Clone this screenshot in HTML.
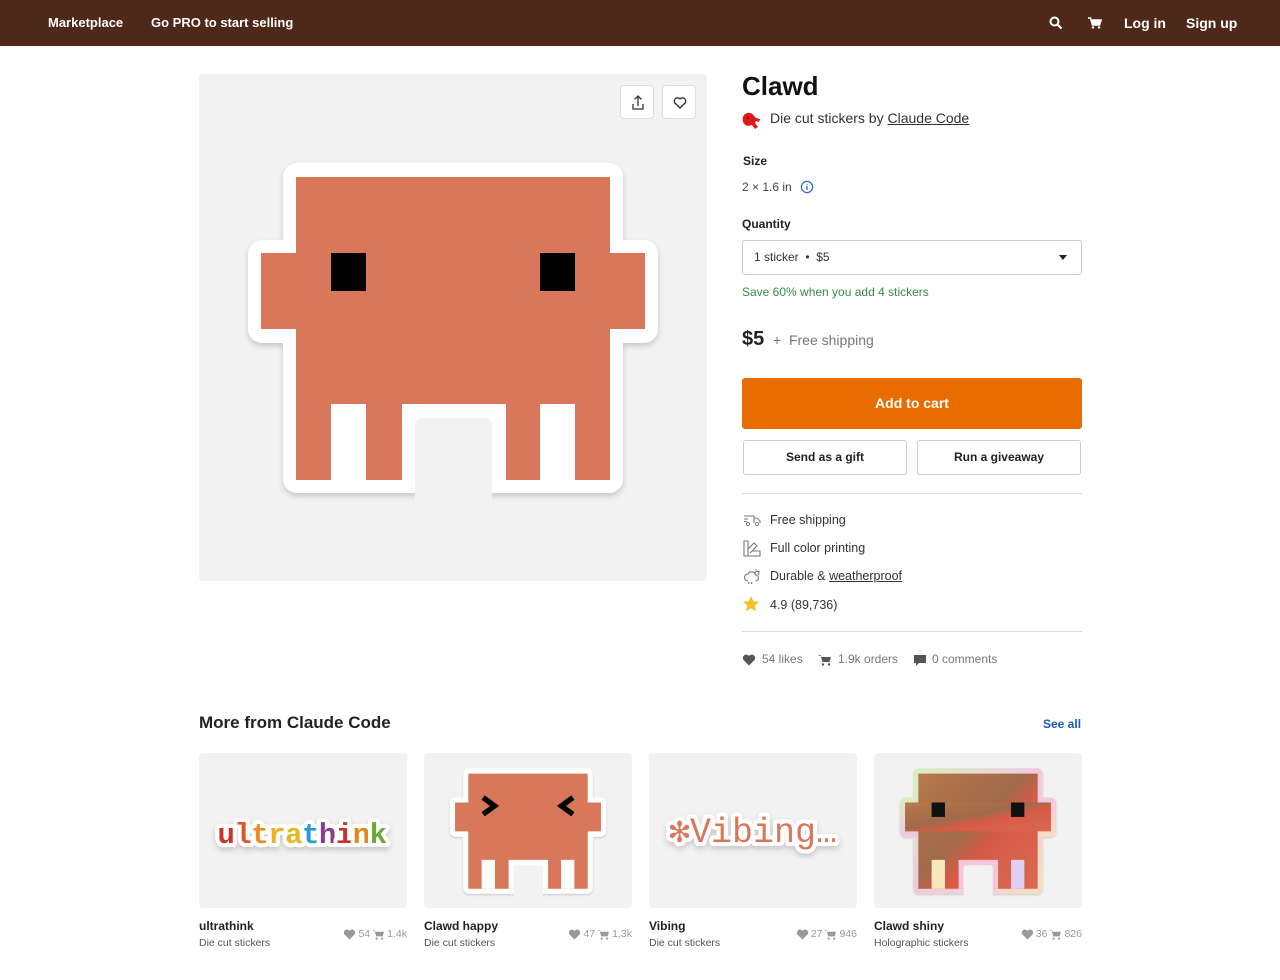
<!DOCTYPE html>
<html><head><meta charset="utf-8"><style>
*{margin:0;padding:0;box-sizing:border-box}
body{width:1280px;height:980px;background:#fff;font-family:"Liberation Sans",Arial,sans-serif;color:#222;position:relative;overflow:hidden}
.a{position:absolute;white-space:nowrap}
.hdr{position:absolute;left:0;top:0;width:1280px;height:46px;background:#4e2818}
.hdr .a{color:#fff;font-weight:bold;font-size:13px;top:15px}
.box{position:absolute;background:#f2f2f2;border-radius:4px}
.ib{position:absolute;width:34px;height:34px;background:#fff;border:1px solid #ddd;border-radius:4px;top:85px}
.btn{position:absolute;border:1px solid #ccc;border-radius:3px;background:#fff;font-weight:bold;font-size:12px;text-align:center;line-height:33px;top:440px;height:35px;width:164px}
.f{font-size:12.5px;color:#333}
.ct{font-size:12px;font-weight:bold;color:#222}
.cs{font-size:10.5px;color:#555}
.cm{font-size:10.5px;color:#999;display:flex;align-items:center;gap:2px}
</style></head><body>
<div class="hdr">
 <div class="a" style="left:48px">Marketplace</div>
 <div class="a" style="left:151px">Go PRO to start selling</div>
 <svg class="a" style="left:1049px;top:16px" width="14" height="14" viewBox="0 0 14 14"><circle cx="5.5" cy="5.5" r="4" fill="none" stroke="#fff" stroke-width="2"/><path d="M8.5 8.5L12.5 12.5" stroke="#fff" stroke-width="2.2"/></svg>
 <svg class="a" style="left:1088px;top:17px" width="14" height="12" viewBox="0 0 14 12"><path d="M0 1h2.5l2 7h7l1.5-5H4" fill="none" stroke="#fff" stroke-width="1.6"/><path d="M4 3h9l-1.5 5h-7z" fill="#fff"/><circle cx="5" cy="10.5" r="1.2" fill="#fff"/><circle cx="11" cy="10.5" r="1.2" fill="#fff"/></svg>
 <div class="a" style="left:1124px;font-size:14px;top:15px">Log in</div>
 <div class="a" style="left:1186px;font-size:14px;top:15px">Sign up</div>
</div>

<div class="box" style="left:199px;top:74px;width:508px;height:507px"></div>
<div class="ib" style="left:620px"><svg width="34" height="34" viewBox="0 0 34 34"><path d="M17 10v10M13.5 13.5L17 10l3.5 3.5M12 18v5h10v-5" fill="none" stroke="#333" stroke-width="1.3"/></svg></div>
<div class="ib" style="left:662px"><svg width="34" height="34" viewBox="0 0 34 34"><path d="M17 22l-5-5a3 3 0 0 1 5-4a3 3 0 0 1 5 4z" fill="none" stroke="#333" stroke-width="1.4"/></svg></div>

<div class="box" style="left:199px;top:753px;width:208px;height:155px"></div>
<div class="box" style="left:424px;top:753px;width:208px;height:155px"></div>
<div class="box" style="left:649px;top:753px;width:208px;height:155px"></div>
<div class="box" style="left:874px;top:753px;width:208px;height:155px"></div>

<svg class="a" style="left:0;top:0" width="1280" height="980">
<defs>
<filter id="sh" x="-10%" y="-10%" width="120%" height="125%"><feDropShadow dx="0" dy="3" stdDeviation="3" flood-color="#000" flood-opacity="0.18"/></filter>
<linearGradient id="holo" x1="0" y1="0" x2="1" y2="1"><stop offset="0" stop-color="#b8784a"/><stop offset="0.45" stop-color="#a06a4a"/><stop offset="0.6" stop-color="#d85a48"/><stop offset="1" stop-color="#d86a50"/></linearGradient>
<linearGradient id="holow" x1="0" y1="0" x2="1" y2="1"><stop offset="0" stop-color="#d8f0c0"/><stop offset="0.5" stop-color="#f0c8e0"/><stop offset="1" stop-color="#f8e0c0"/></linearGradient>
<g id="stk">
 <g filter="url(#sh)">
 <rect x="283" y="163" width="340" height="330" rx="14" fill="#fff"/>
 <rect x="248" y="240" width="410" height="103" rx="14" fill="#fff"/>
 </g>
 <rect x="415" y="418" width="77" height="90" rx="6" fill="#f2f2f2"/>
</g>
</defs>
<use href="#stk"/>
<rect x="296" y="177" width="314" height="303" fill="#d9775a"/>
<rect x="261" y="253" width="384" height="76" fill="#d9775a"/>
<rect x="331" y="253" width="35" height="38" fill="#000"/>
<rect x="540" y="253" width="35" height="38" fill="#000"/>
<rect x="331" y="404" width="35" height="76" fill="#fff"/>
<rect x="540" y="404" width="35" height="76" fill="#fff"/>
<rect x="402" y="404" width="104" height="76" fill="#fff"/>
<rect x="415" y="418" width="77" height="90" rx="6" fill="#f2f2f2"/>
<g transform="translate(528,831) scale(0.38) translate(-453,-328)">
<use href="#stk"/>
<rect x="296" y="177" width="314" height="303" fill="#d9775a"/>
<rect x="261" y="253" width="384" height="76" fill="#d9775a"/>
<path d="M335 240l30 22l-30 22" fill="none" stroke="#000" stroke-width="14"/>
<path d="M571 240l-30 22l30 22" fill="none" stroke="#000" stroke-width="14"/>
<rect x="331" y="404" width="35" height="76" fill="#fff"/>
<rect x="540" y="404" width="35" height="76" fill="#fff"/>
<rect x="402" y="404" width="104" height="76" fill="#fff"/>
<rect x="415" y="418" width="77" height="90" rx="6" fill="#f2f2f2"/>
</g>
<g transform="translate(978,831) scale(0.38) translate(-453,-328)">
<g filter="url(#sh)">
<rect x="283" y="163" width="340" height="330" rx="14" fill="url(#holow)"/>
<rect x="248" y="240" width="410" height="103" rx="14" fill="url(#holow)"/>
</g>
<rect x="296" y="177" width="314" height="303" fill="url(#holo)"/>
<rect x="261" y="253" width="384" height="76" fill="url(#holo)"/>
<rect x="331" y="253" width="35" height="38" fill="#111"/>
<rect x="540" y="253" width="35" height="38" fill="#111"/>
<rect x="331" y="404" width="35" height="76" fill="#f8e8c0"/>
<rect x="540" y="404" width="35" height="76" fill="#e0d0f0"/>
<rect x="402" y="404" width="104" height="76" fill="#f4c8d8"/>
<rect x="415" y="418" width="77" height="90" rx="6" fill="#f2f2f2"/>
</g>
<text x="302" y="843" text-anchor="middle" font-family="Liberation Mono,monospace" font-weight="bold" font-size="29" stroke="#fff" stroke-width="8" stroke-linejoin="round" paint-order="stroke" filter="url(#sh)" letter-spacing="-0.5"><tspan fill="#c8362c">u</tspan><tspan fill="#e0542a">l</tspan><tspan fill="#f08a20">t</tspan><tspan fill="#f0b020">r</tspan><tspan fill="#e0b820">a</tspan><tspan fill="#2a9ad0">t</tspan><tspan fill="#8a3a8a">h</tspan><tspan fill="#c8362c">i</tspan><tspan fill="#e08a20">n</tspan><tspan fill="#6aa83a">k</tspan></text>
<text x="753" y="842" text-anchor="middle" font-family="Liberation Mono,monospace" font-size="35" fill="#d9775a" stroke="#fff" stroke-width="8" stroke-linejoin="round" paint-order="stroke" filter="url(#sh)">✻Vibing…</text>
</svg>

<div class="a" style="left:742px;top:71px;font-size:26px;font-weight:bold;color:#111">Clawd</div>
<svg class="a" style="left:741px;top:111px" width="22" height="20" viewBox="0 0 22 20"><path d="M3 4c3-3 8-3 10 1l2 2 4 1-1 3-3-1-1 2 3 4-3 2-3-4-4 1C2 14 0 8 3 4z" fill="#e01818"/><circle cx="7" cy="7" r="1" fill="#000"/></svg>
<div class="a" style="left:770px;top:110px;font-size:14px;color:#333">Die cut stickers by <span style="text-decoration:underline">Claude Code</span></div>
<div class="a" style="left:743px;top:154px;font-size:12px;font-weight:bold">Size</div>
<div class="a" style="left:742px;top:180px;font-size:12px;color:#444">2 × 1.6 in</div>
<svg class="a" style="left:800px;top:180px" width="14" height="14" viewBox="0 0 14 14"><circle cx="7" cy="7" r="5.6" fill="none" stroke="#2a6ac8" stroke-width="1.2"/><path d="M7 6v4M7 4v.8" stroke="#2a6ac8" stroke-width="1.3"/></svg>
<div class="a" style="left:742px;top:217px;font-size:12px;font-weight:bold">Quantity</div>
<div class="a" style="left:742px;top:240px;width:340px;height:35px;border:1px solid #ccc;border-radius:3px"></div>
<div class="a" style="left:754px;top:250px;font-size:12px;color:#333">1 sticker &nbsp;•&nbsp; $5</div>
<div class="a" style="left:1059px;top:255px;width:0;height:0;border-left:4px solid transparent;border-right:4px solid transparent;border-top:5px solid #222"></div>
<div class="a" style="left:742px;top:285px;font-size:12px;color:#3a8a4a">Save 60% when you add 4 stickers</div>
<div class="a" style="left:742px;top:328px;font-size:20px;font-weight:bold;color:#222">$5</div>
<div class="a" style="left:773px;top:332px;font-size:14px;color:#777">+ &nbsp;Free shipping</div>
<div class="a" style="left:742px;top:378px;width:340px;height:51px;background:#e86c00;border-radius:3px;color:#fff;font-weight:bold;font-size:14px;text-align:center;line-height:51px">Add to cart</div>
<div class="btn" style="left:743px">Send as a gift</div>
<div class="btn" style="left:917px">Run a giveaway</div>
<div class="a" style="left:742px;top:493px;width:340px;height:1px;background:#ddd"></div>

<svg class="a" style="left:743px;top:513px" width="18" height="14" viewBox="0 0 18 14"><path d="M1 3h10v7M11 5h3l3 3v2M1 6h4M1 8.5h3" fill="none" stroke="#777" stroke-width="1.1"/><circle cx="5" cy="11" r="1.6" fill="none" stroke="#777"/><circle cx="14" cy="11" r="1.6" fill="none" stroke="#777"/></svg>
<div class="a f" style="left:770px;top:513px">Free shipping</div>
<svg class="a" style="left:743px;top:540px" width="18" height="17" viewBox="0 0 18 17"><path d="M1 1h4v15H1zM5 9l6-6 3 3-7 7M5 16h12v-5H9" fill="none" stroke="#777" stroke-width="1.1"/></svg>
<div class="a f" style="left:770px;top:541px">Full color printing</div>
<svg class="a" style="left:743px;top:568px" width="18" height="17" viewBox="0 0 18 17"><path d="M5 13a3.5 3.5 0 0 1 0-7a4 4 0 0 1 7.5 1a3 3 0 0 1 0 6M6 14l-.5 2M9 14l-.5 2M12 5a2 2 0 1 1 3 2M13 1v1.5M16.5 3l-1 1" fill="none" stroke="#777" stroke-width="1.1"/></svg>
<div class="a f" style="left:770px;top:569px">Durable &amp; <span style="text-decoration:underline">weatherproof</span></div>
<svg class="a" style="left:742px;top:595px" width="18" height="18" viewBox="0 0 18 18"><path d="M9 1l2.4 5.2 5.6.6-4.2 3.8 1.2 5.6L9 13.3 4 16.2l1.2-5.6L1 6.8l5.6-.6z" fill="#f5c02a"/></svg>
<div class="a f" style="left:770px;top:598px">4.9 (89,736)</div>
<div class="a" style="left:742px;top:631px;width:340px;height:1px;background:#ddd"></div>

<svg class="a" style="left:742px;top:654px" width="14" height="12" viewBox="0 0 14 12"><path d="M7 11.5L1.5 6a3 3 0 0 1 5.5-4a3 3 0 0 1 5.5 4z" fill="#555"/></svg>
<div class="a" style="left:762px;top:652px;font-size:12px;color:#777">54 likes</div>
<svg class="a" style="left:818px;top:654px" width="14" height="12" viewBox="0 0 14 12"><path d="M0 1h2.5l2 7h7l1.5-5H4z" fill="#555"/><circle cx="5" cy="10.5" r="1.2" fill="#555"/><circle cx="11" cy="10.5" r="1.2" fill="#555"/></svg>
<div class="a" style="left:838px;top:652px;font-size:12px;color:#777">1.9k orders</div>
<svg class="a" style="left:913px;top:654px" width="14" height="13" viewBox="0 0 14 13"><path d="M1 1h12v8H6l-3 3V9H1z" fill="#555"/></svg>
<div class="a" style="left:932px;top:652px;font-size:12px;color:#777">0 comments</div>

<div class="a" style="left:199px;top:713px;font-size:17px;font-weight:bold;color:#222">More from Claude Code</div>
<div class="a" style="left:1043px;top:717px;font-size:12px;font-weight:bold;color:#1a5ab8">See all</div>

<div class="a ct" style="left:199px;top:919px">ultrathink</div><div class="a cs" style="left:199px;top:937px">Die cut stickers</div>
<div class="a cm" style="right:873px;top:928px"><svg width="13" height="11" viewBox="0 0 14 12"><path d="M7 11.5L1.5 6a3 3 0 0 1 5.5-4a3 3 0 0 1 5.5 4z" fill="#999"/></svg>54<svg width="13" height="11" viewBox="0 0 14 12"><path d="M0 1h2.5l2 7h7l1.5-5H4z" fill="#999"/><circle cx="5" cy="10.5" r="1.2" fill="#999"/><circle cx="11" cy="10.5" r="1.2" fill="#999"/></svg> 1.4k</div>
<div class="a ct" style="left:424px;top:919px">Clawd happy</div><div class="a cs" style="left:424px;top:937px">Die cut stickers</div>
<div class="a cm" style="right:648px;top:928px"><svg width="13" height="11" viewBox="0 0 14 12"><path d="M7 11.5L1.5 6a3 3 0 0 1 5.5-4a3 3 0 0 1 5.5 4z" fill="#999"/></svg>47<svg width="13" height="11" viewBox="0 0 14 12"><path d="M0 1h2.5l2 7h7l1.5-5H4z" fill="#999"/><circle cx="5" cy="10.5" r="1.2" fill="#999"/><circle cx="11" cy="10.5" r="1.2" fill="#999"/></svg> 1.3k</div>
<div class="a ct" style="left:649px;top:919px">Vibing</div><div class="a cs" style="left:649px;top:937px">Die cut stickers</div>
<div class="a cm" style="right:423px;top:928px"><svg width="13" height="11" viewBox="0 0 14 12"><path d="M7 11.5L1.5 6a3 3 0 0 1 5.5-4a3 3 0 0 1 5.5 4z" fill="#999"/></svg>27<svg width="13" height="11" viewBox="0 0 14 12"><path d="M0 1h2.5l2 7h7l1.5-5H4z" fill="#999"/><circle cx="5" cy="10.5" r="1.2" fill="#999"/><circle cx="11" cy="10.5" r="1.2" fill="#999"/></svg> 946</div>
<div class="a ct" style="left:874px;top:919px">Clawd shiny</div><div class="a cs" style="left:874px;top:937px">Holographic stickers</div>
<div class="a cm" style="right:198px;top:928px"><svg width="13" height="11" viewBox="0 0 14 12"><path d="M7 11.5L1.5 6a3 3 0 0 1 5.5-4a3 3 0 0 1 5.5 4z" fill="#999"/></svg>36<svg width="13" height="11" viewBox="0 0 14 12"><path d="M0 1h2.5l2 7h7l1.5-5H4z" fill="#999"/><circle cx="5" cy="10.5" r="1.2" fill="#999"/><circle cx="11" cy="10.5" r="1.2" fill="#999"/></svg> 826</div>
</body></html>
